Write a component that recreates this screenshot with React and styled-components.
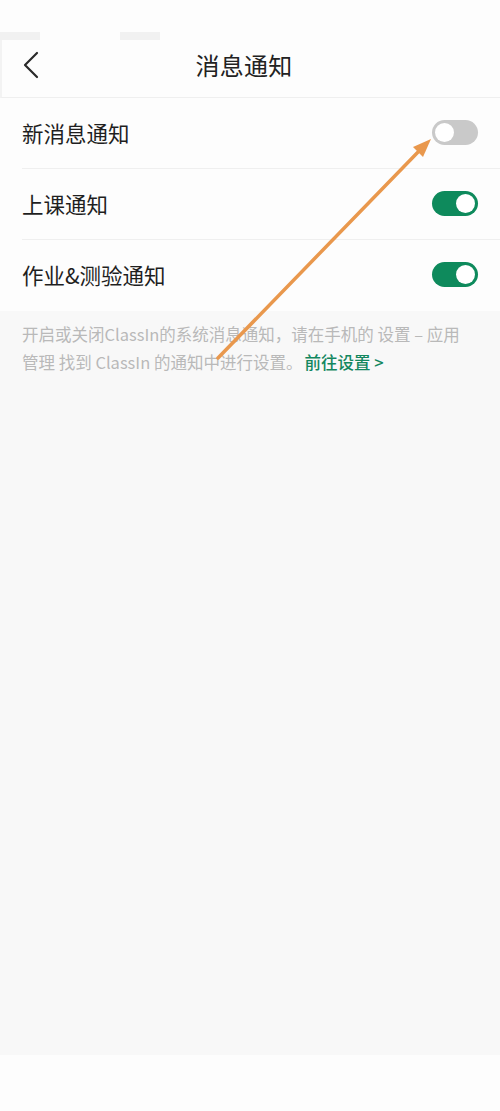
import React, { useState } from "react";
import styled, { createGlobalStyle } from "styled-components";

const GlobalStyle = createGlobalStyle`
  html, body { margin: 0; padding: 0; background: #fdfdfd; }
  body { font-family: "Noto Sans CJK SC", "Noto Sans", sans-serif; }
  * { box-sizing: border-box; }
`;

const Page = styled.div`
  position: relative;
  width: 500px;
  height: 1111px;
  display: flex;
  flex-direction: column;
  background: #fdfdfd;
`;

const StatusBar = styled.div`
  height: 40px;
  display: flex;
  align-items: flex-end;
  gap: 80px;
`;

const StatusStub = styled.div`
  width: 40px;
  height: 8px;
  background: #f1f1f1;
`;

const Header = styled.header`
  height: 58px;
  display: flex;
  align-items: center;
  justify-content: center;
  position: relative;
  padding: 0 14px 9px 0;
  background: #fdfdfd;
  border-bottom: 1px solid #efefef;
  border-left: 2px solid #f3f3f3;
`;

const BackButton = styled.button`
  position: absolute;
  left: 18px;
  top: 10px;
  border: 0;
  background: none;
  padding: 0;
  display: flex;
`;

const Title = styled.h1`
  margin: 0;
  font-size: 24px;
  font-weight: 400;
  color: #222;
  letter-spacing: 0.3px;
`;

const List = styled.div`
  background: #fdfdfd;
`;

const Row = styled.div`
  height: 71px;
  display: flex;
  align-items: center;
  justify-content: space-between;
  padding: 0 22px 3px;
  position: relative;
  &:not(:last-child)::after {
    content: "";
    position: absolute;
    left: 22px;
    right: 0;
    bottom: 0;
    height: 1px;
    background: #efefef;
  }
`;

const Label = styled.span`
  font-size: 21.5px;
  color: #1f1f1f;
`;

const Track = styled.button`
  width: 46px;
  height: 25px;
  border-radius: 13px;
  border: 0;
  padding: 3px;
  display: flex;
  justify-content: ${(p) => (p.$on ? "flex-end" : "flex-start")};
  align-items: center;
  background: ${(p) => (p.$on ? "#0e8a5c" : "#c9c9c9")};
  cursor: pointer;
`;

const Knob = styled.span`
  width: 19px;
  height: 19px;
  border-radius: 50%;
  background: #fff;
`;

const Footer = styled.div`
  flex: 0 0 744px;
  background: #f8f8f8;
  padding: 9px 28px 0 22px;
`;

const Note = styled.p`
  margin: 0;
  font-size: 16.5px;
  line-height: 28px;
  color: #b9b9b9;
`;

const Link = styled.a`
  color: #13875f;
  font-weight: 500;
  text-decoration: none;
  margin-left: 2px;
`;

const Overlay = styled.svg`
  position: absolute;
  left: 0;
  top: 0;
  pointer-events: none;
`;

function Toggle({ on, onClick }) {
  return (
    <Track $on={on} onClick={onClick}>
      <Knob />
    </Track>
  );
}

export default function App() {
  const [flags, setFlags] = useState({ msg: false, cls: true, hw: true });
  const rows = [
    { key: "msg", label: "新消息通知" },
    { key: "cls", label: "上课通知" },
    { key: "hw", label: "作业&测验通知" },
  ];

  return (
    <Page>
      <GlobalStyle />
      <StatusBar>
        <StatusStub />
        <StatusStub />
      </StatusBar>
      <Header>
        <BackButton>
          <svg width="22" height="30" viewBox="0 0 22 30">
            <path d="M17 3 L5 15 L17 27" fill="none" stroke="#2a2a2a" strokeWidth="2.2" strokeLinecap="round" strokeLinejoin="round" />
          </svg>
        </BackButton>
        <Title>消息通知</Title>
      </Header>
      <List>
        {rows.map((r) => (
          <Row key={r.key}>
            <Label>{r.label}</Label>
            <Toggle on={flags[r.key]} onClick={() => setFlags({ ...flags, [r.key]: !flags[r.key] })} />
          </Row>
        ))}
      </List>
      <Footer>
        <Note>
          开启或关闭ClassIn的系统消息通知，请在手机的 设置 – 应用管理 找到 ClassIn 的通知中进行设置。<Link href="#">前往设置 &gt;</Link>
        </Note>
      </Footer>
      <Overlay width="500" height="1111" viewBox="0 0 500 1111">
        <line x1="218" y1="358" x2="420" y2="150" stroke="#e9984d" strokeWidth="3.5" strokeLinecap="round" />
        <polygon points="431,139 413,147 423,157" fill="#e9984d" />
      </Overlay>
    </Page>
  );
}
